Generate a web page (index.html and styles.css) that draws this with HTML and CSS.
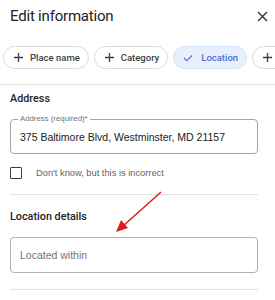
FILE: index.html
```html
<!DOCTYPE html>
<html>
<head>
<meta charset="utf-8">
<link rel="stylesheet" href="styles.css">
</head>
<body>
<div class="panel">
  <header class="header">
    <h1 class="title">Edit information</h1>
    <button class="close" aria-label="Close">
      <svg width="11" height="11" viewBox="0 0 11 11"><path d="M1 1L10 10M10 1L1 10" stroke="#3c4043" stroke-width="1.5" fill="none"/></svg>
    </button>
  </header>
  <div class="chips">
    <span class="chip"><svg class="ico" width="9" height="9" viewBox="0 0 9 9"><path d="M4.5 0V9M0 4.5H9" stroke="#3c4043" stroke-width="1.3"/></svg>Place name</span>
    <span class="chip"><svg class="ico" width="9" height="9" viewBox="0 0 9 9"><path d="M4.5 0V9M0 4.5H9" stroke="#3c4043" stroke-width="1.3"/></svg>Category</span>
    <span class="chip active"><svg class="ico" width="10" height="8" viewBox="0 0 10 8"><path d="M1 4L3.8 6.8L9 1.5" stroke="#4a6fd1" stroke-width="1.1" fill="none"/></svg>Location</span>
    <span class="chip"><svg class="ico" width="9" height="9" viewBox="0 0 9 9"><path d="M4.5 0V9M0 4.5H9" stroke="#3c4043" stroke-width="1.3"/></svg>Hours</span>
  </div>
  <div class="rule full"></div>
  <section class="section">
    <h2 class="heading">Address</h2>
    <div class="field">
      <span class="float-label">Address (required)*</span>
      <span class="value">375 Baltimore Blvd, Westminster, MD 21157</span>
    </div>
    <label class="check"><span class="box"></span><span class="check-text">Don't know, but this is incorrect</span></label>
  </section>
  <div class="rule inset"></div>
  <section class="section second">
    <h2 class="heading">Location details</h2>
    <div class="field plain">
      <span class="placeholder">Located within</span>
    </div>
  </section>
  <div class="rule inset last"></div>
  <svg class="arrow" width="60" height="50" viewBox="0 0 60 50">
    <path d="M49 1L11 35" stroke="#e01b1b" stroke-width="1.5" fill="none"/>
    <path d="M4 41L9 29L16 37Z" fill="#e01b1b"/>
  </svg>
</div>
</body>
</html>
```
FILE: styles.css
```css
* { box-sizing: border-box; }
html, body { margin: 0; padding: 0; background: #fff; }
body { font-family: Roboto, "Noto Sans", Arial, sans-serif; color: #202124; width: 275px; overflow: hidden; }
.panel { position: relative; height: 300px; overflow: hidden; }
.header { display: flex; align-items: flex-start; justify-content: space-between; padding: 4px 7px 0 10px; height: 30px; }
.title { margin: 0; font-size: 15px; font-weight: 400; line-height: 24px; letter-spacing: -0.2px; color: #202124; }
.close { border: 0; background: none; padding: 0; margin-top: 7px; width: 11px; height: 11px; display: flex; }
.chips { display: flex; gap: 5px; padding-left: 3px; margin-top: 16px; white-space: nowrap; }
.chip { flex: none; display: inline-flex; align-items: center; height: 23px; padding: 0 8px 0 10px; border: 1px solid #dadce0; border-radius: 12px; font-size: 9.5px; font-weight: 500; color: #3c4043; }
.chip .ico { margin-right: 7px; }
.chip.active { background: #e8f0fe; border-color: #d2e3fc; color: #4a6fd1; padding-left: 9px; padding-right: 8px; }
.chip.active .ico { margin-right: 8px; }
.rule { height: 1px; background: #e3e3e3; }
.rule.full { margin-top: 15px; }
.rule.inset { margin: 0 17px 0 10px; }
.section { padding: 6px 17px 0 10px; }
.heading { margin: 0; font-size: 10.8px; font-weight: 500; line-height: 16px; color: #202124; }
.field { position: relative; margin-top: 12px; height: 35px; border: 1px solid #a6a6a6; border-radius: 4px; display: flex; align-items: center; padding-left: 9px; font-family: "Liberation Sans", Arial, sans-serif; }
.float-label { position: absolute; top: -6px; left: 7px; padding: 0 2px; background: #fff; font-size: 7.8px; line-height: 10px; color: #70757a; }
.value { font-size: 10.5px; color: #202124; }
.check { display: flex; align-items: center; margin: 13px 0 15px; }
.box { width: 12px; height: 12px; border: 1.5px solid #3c4043; border-radius: 1px; }
.check-text { margin-left: 14px; font-family: "Liberation Sans", Arial, sans-serif; font-size: 9.3px; color: #5f6368; }
.section.second { padding-top: 14px; }
.second .field { margin-top: 12px; height: 36px; border-color: #b0b0b0; }
.placeholder { font-size: 10.5px; color: #70757a; }
.rule.last { margin-top: 16px; }
.arrow { position: absolute; left: 112px; top: 191px; }
```
